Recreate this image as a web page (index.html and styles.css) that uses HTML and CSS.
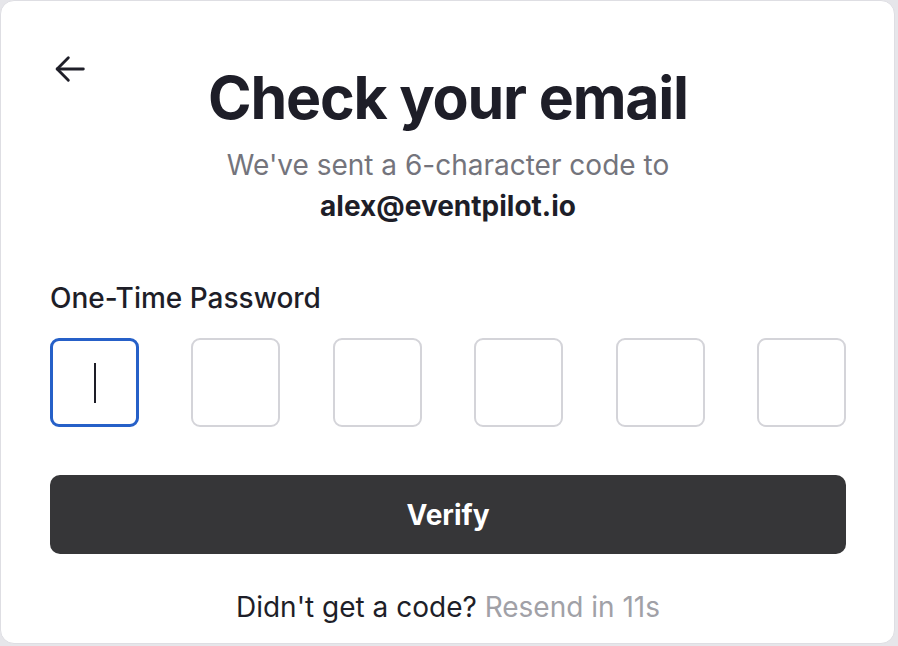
FILE: index.html
```html
<!DOCTYPE html>
<html lang="en">
<head>
<meta charset="utf-8">
<title>Check your email</title>
<link rel="stylesheet" href="styles.css">
</head>
<body>
<main class="card">
  <header class="head">
    <button class="back" aria-label="Back">
      <svg width="40" height="40" viewBox="0 0 24 24" fill="none" stroke="#1f1f29" stroke-width="1.7" stroke-linecap="round" stroke-linejoin="round"><path d="M20 12H4.3"/><path d="M11 5.3 4.3 12l6.7 6.7"/></svg>
    </button>
    <h1 class="title">Check your email</h1>
    <span></span>
  </header>
  <p class="sub">We've sent a 6-character code to</p>
  <p class="email">alex@eventpilot.io</p>
  <label class="label">One-Time Password</label>
  <div class="otp">
    <div class="box active"><span class="caret"></span></div>
    <div class="box"></div>
    <div class="box"></div>
    <div class="box"></div>
    <div class="box"></div>
    <div class="box"></div>
  </div>
  <button class="verify">Verify</button>
  <p class="foot">Didn't get a code? <span class="resend">Resend in 11s</span></p>
</main>
</body>
</html>
```

FILE: styles.css
```css
html, body {
  margin: 0;
  padding: 0;
}
body {
  background: #e6e6ea;
  width: 898px;
  height: 646px;
  overflow: hidden;
  font-family: Inter, "Noto Sans", sans-serif;
  color: #1e1e28;
}
.card {
  box-sizing: border-box;
  width: 895px;
  height: 644px;
  background: #fff;
  border: 1px solid #dedee3;
  border-radius: 14px;
  padding: 0 48px 0 49px;
  display: flex;
  flex-direction: column;
}
.head {
  display: grid;
  grid-template-columns: 1fr auto 1fr;
  align-items: start;
  margin-top: 62px;
}
.back {
  justify-self: start;
  background: none;
  border: 0;
  padding: 0;
  margin: -14px 0 0 0;
  width: 40px;
  height: 40px;
  display: flex;
}
.title {
  margin: 0;
  font-size: 59px;
  line-height: 70px;
  font-weight: 700;
  letter-spacing: -1.2px;
  color: #1e1e28;
  text-align: center;
}
.sub {
  margin: 15px 0 0;
  text-align: center;
  font-size: 28px;
  line-height: 34px;
  color: #74747c;
}
.email {
  margin: 7px 0 0;
  text-align: center;
  font-size: 28px;
  line-height: 34px;
  font-weight: 700;
  color: #1e1e28;
}
.label {
  margin-top: 58px;
  font-size: 28px;
  line-height: 34px;
  font-weight: 500;
  color: #1e1e28;
}
.otp {
  margin-top: 23px;
  display: flex;
  justify-content: space-between;
}
.box {
  box-sizing: border-box;
  width: 89px;
  height: 89px;
  border: 2px solid #d4d4d9;
  border-radius: 9px;
  display: flex;
  align-items: center;
  justify-content: center;
}
.box.active {
  border: 3px solid #2660c8;
}
.caret {
  width: 2px;
  height: 40px;
  background: #1e1e28;
}
.verify {
  margin-top: 48px;
  height: 79px;
  border: 0;
  border-radius: 10px;
  background: #363638;
  color: #fff;
  font-family: inherit;
  font-size: 28px;
  font-weight: 700;
}
.foot {
  margin: 36px 0 0;
  text-align: center;
  font-size: 28px;
  line-height: 34px;
  color: #1e1e28;
}
.resend {
  color: #a1a1a7;
}
```
